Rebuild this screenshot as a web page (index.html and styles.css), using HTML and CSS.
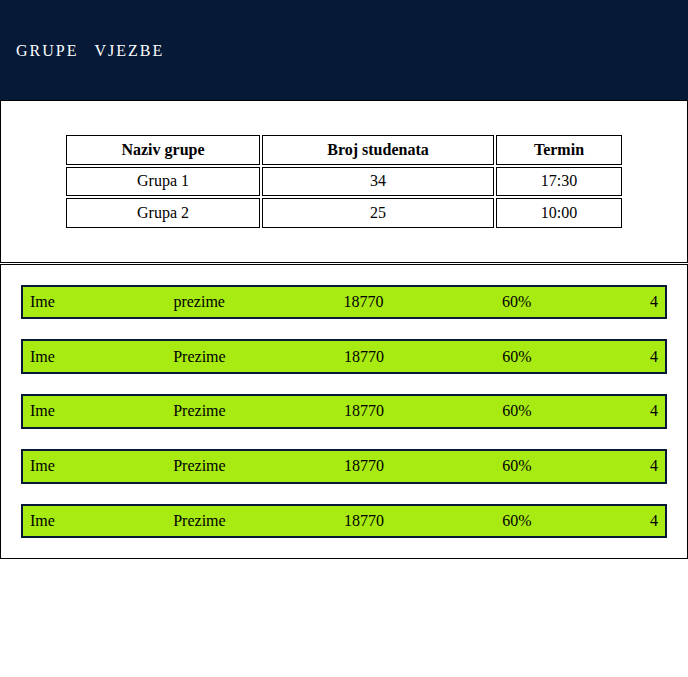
FILE: index.html
```html
<!DOCTYPE html>
<html>
<head>
<meta charset="utf-8">
<link rel="stylesheet" href="styles.css">
</head>
<body>
<header class="topbar">
  <nav class="nav">
    <a class="nav-link" href="#">GRUPE</a>
    <a class="nav-link" href="#">VJEZBE</a>
  </nav>
</header>
<section class="panel">
  <table class="groups">
    <thead>
      <tr>
        <th class="col-name">Naziv grupe</th>
        <th class="col-count">Broj studenata</th>
        <th class="col-time">Termin</th>
      </tr>
    </thead>
    <tbody>
      <tr><td>Grupa 1</td><td>34</td><td>17:30</td></tr>
      <tr><td>Grupa 2</td><td>25</td><td>10:00</td></tr>
    </tbody>
  </table>
</section>
<section class="panel panel-list">
  <div class="student"><span>Ime</span><span>prezime</span><span>18770</span><span>60%</span><span>4</span></div>
  <div class="student"><span>Ime</span><span>Prezime</span><span>18770</span><span>60%</span><span>4</span></div>
  <div class="student"><span>Ime</span><span>Prezime</span><span>18770</span><span>60%</span><span>4</span></div>
  <div class="student"><span>Ime</span><span>Prezime</span><span>18770</span><span>60%</span><span>4</span></div>
  <div class="student"><span>Ime</span><span>Prezime</span><span>18770</span><span>60%</span><span>4</span></div>
</section>
</body>
</html>
```
FILE: styles.css
```css
html, body {
  margin: 0;
  padding: 0;
  background: #ffffff;
}
body {
  font-family: "Liberation Serif", "Times New Roman", serif;
  font-size: 16px;
  color: #000;
}
.topbar {
  height: 100px;
  background: #061a38;
  display: flex;
  align-items: center;
  padding-left: 16px;
}
.nav {
  display: flex;
  gap: 16px;
  padding-top: 1px;
}
.nav-link {
  color: #ffffff;
  text-decoration: none;
  letter-spacing: 2px;
  font-size: 16px;
}
.panel {
  border: 1px solid #000;
  overflow: hidden;
}
.panel-list {
  margin-top: 1px;
}
.groups {
  width: 560px;
  margin: 32px auto;
  border-spacing: 2px;
  font-family: inherit;
}
.groups th,
.groups td {
  border: 1px solid #000;
  padding: 4.75px 0;
  text-align: center;
  font-size: 16px;
}
.col-name { width: 192px; }
.col-count { width: 230px; }
.col-time { width: 124px; }
.student {
  box-sizing: border-box;
  height: 34.75px;
  margin: 20px;
  padding: 0 7px;
  background: #a8eb12;
  border: 2px solid #061a38;
  display: flex;
  align-items: center;
  justify-content: space-between;
}
```
